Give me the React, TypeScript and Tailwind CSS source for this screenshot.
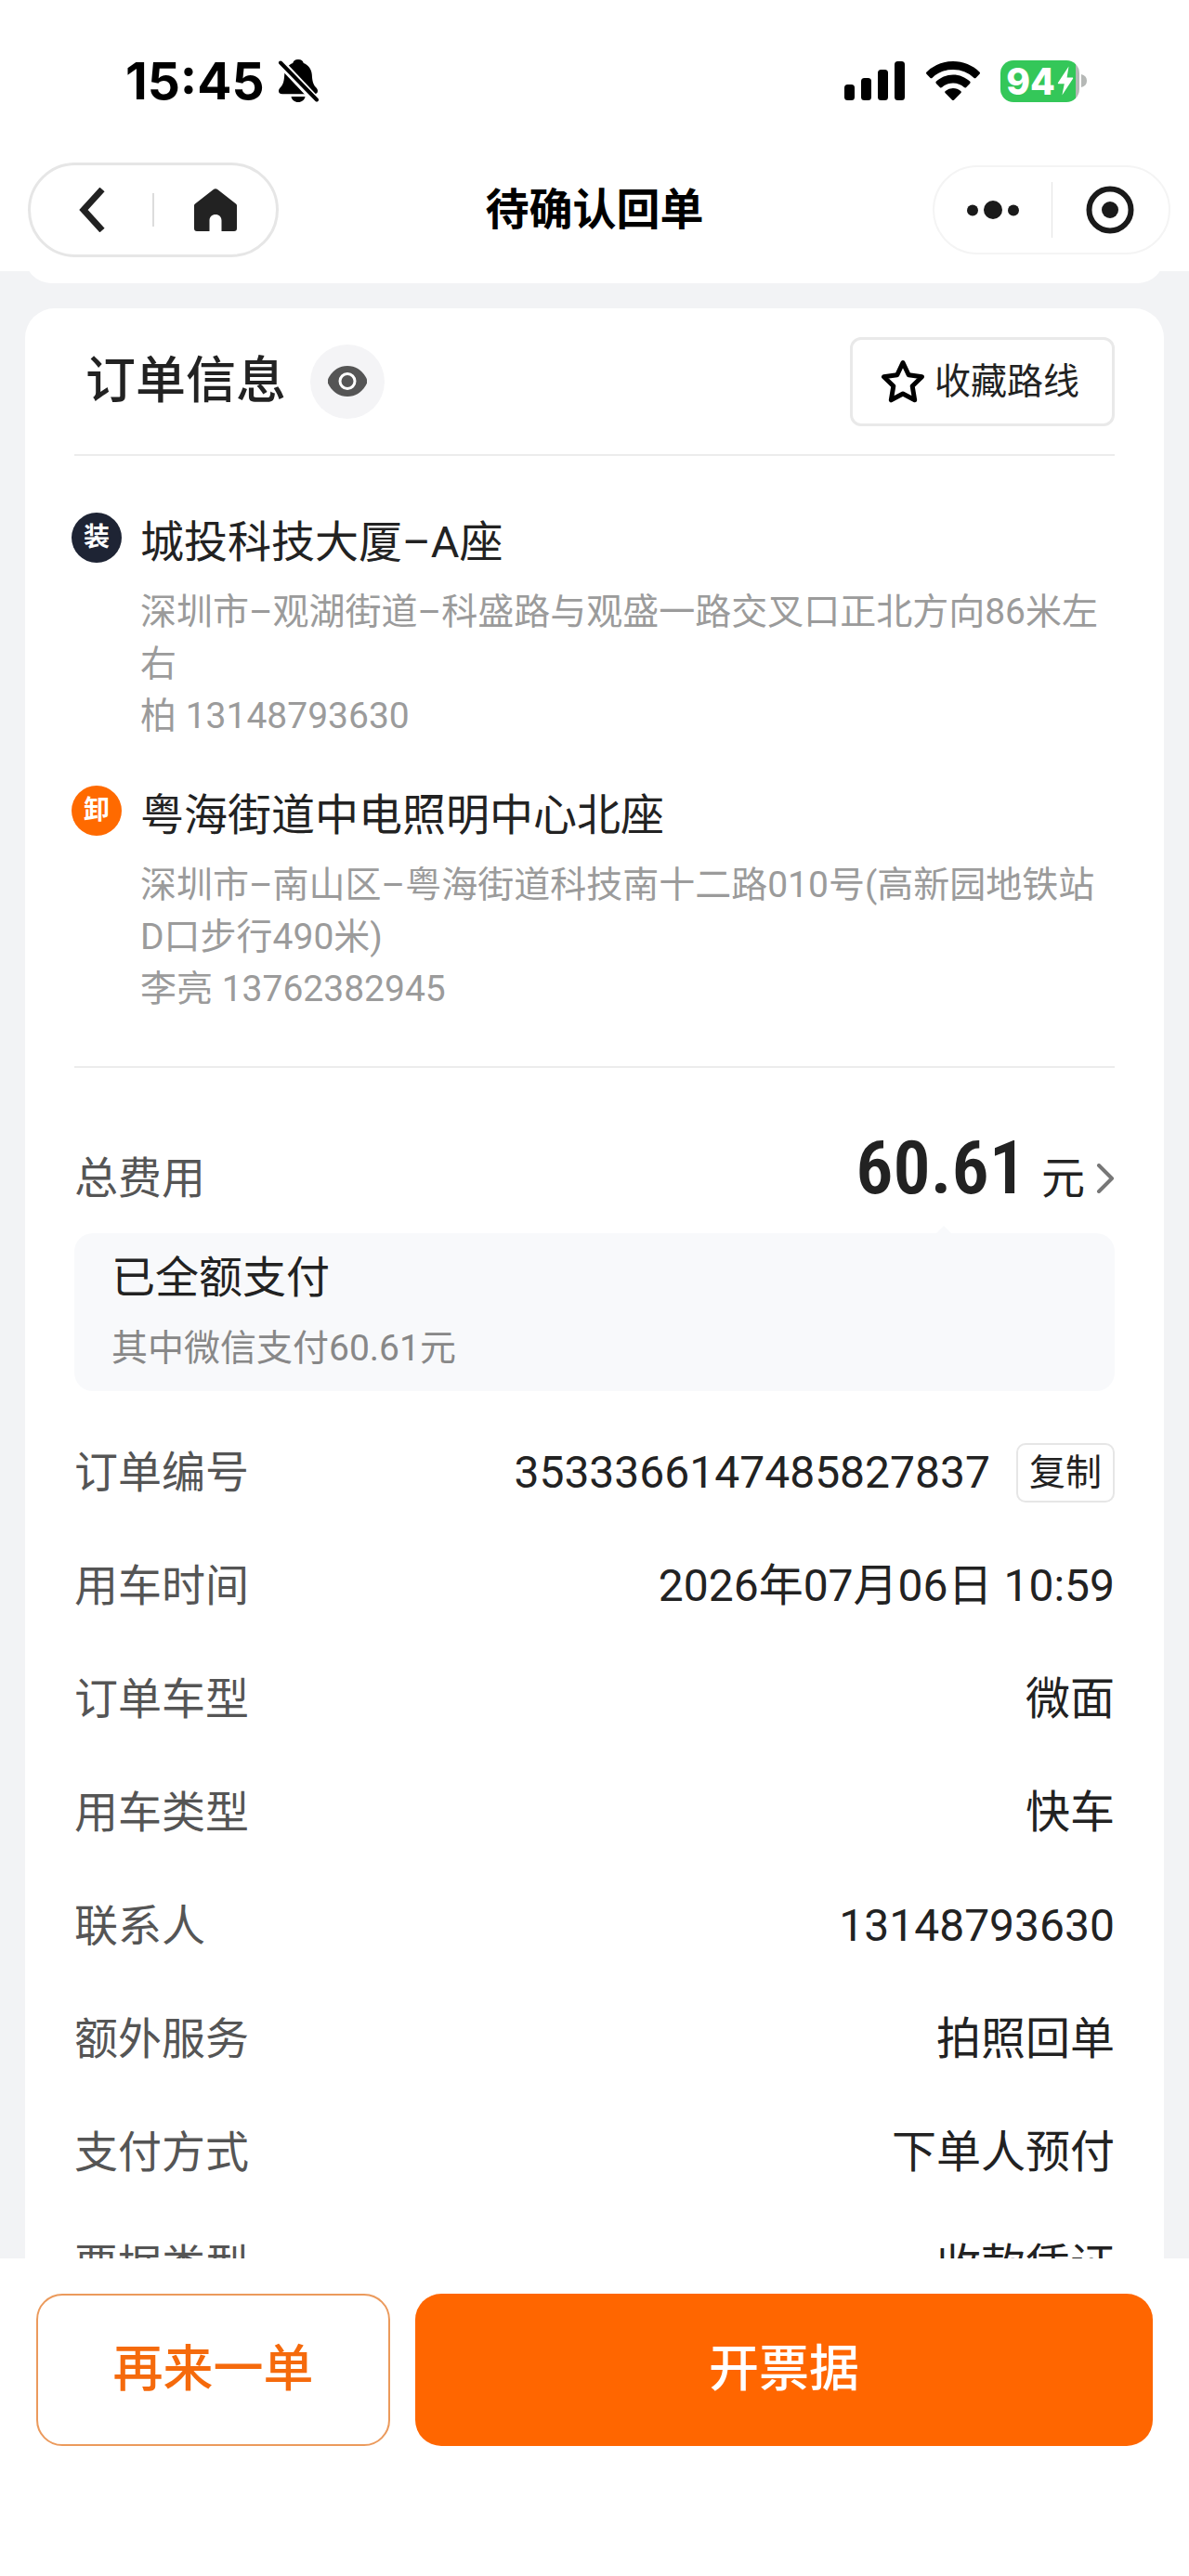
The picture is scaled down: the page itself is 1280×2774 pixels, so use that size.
import { useState } from 'react';

const stops = [
  {
    tag: '装',
    tagColor: 'bg-[#1e2434]',
    name: '城投科技大厦–A座',
    address: '深圳市–观湖街道–科盛路与观盛一路交叉口正北方向86米左右',
    contact: '柏 13148793630',
  },
  {
    tag: '卸',
    tagColor: 'bg-[#ff6a00]',
    name: '粤海街道中电照明中心北座',
    address: '深圳市–南山区–粤海街道科技南十二路010号(高新园地铁站D口步行490米)',
    contact: '李亮 13762382945',
  },
];

const details = [
  { label: '订单编号', value: '3533366147485827837', copy: true },
  { label: '用车时间', value: '2026年07月06日 10:59' },
  { label: '订单车型', value: '微面' },
  { label: '用车类型', value: '快车' },
  { label: '联系人', value: '13148793630' },
  { label: '额外服务', value: '拍照回单' },
  { label: '支付方式', value: '下单人预付' },
  { label: '票据类型', value: '收款凭证' },
];

const BellOffIcon = () => (
  <svg width="44" height="48" viewBox="0 0 44 48" fill="none">
    <path
      d="M22 1c3.400 0 5 1.600 5.800 4 5.200 2 8.600 6.600 9 12.400.4 6 1 10 4.200 13.600 1.400 1.600 2 2.600 2 4 0 2.300-1.600 3.300-4 3.300H5C2.600 38.300 1 37.300 1 35c0-1.400.7-2.400 2-4 3.300-3.600 3.800-7.600 4.200-13.600C7.600 11.600 11 7 16.200 5 17 2.600 18.600 1 22 1Z"
      fill="#000"
    />
    <path d="M14.500 41h15c-.6 3.600-3.600 6-7.500 6s-6.900-2.400-7.500-6Z" fill="#000" />
    <path d="M0 1.500l44 46.500" stroke="#fff" strokeWidth="9" />
    <path d="M3 4.500l39 40" stroke="#000" strokeWidth="4" strokeLinecap="round" />
  </svg>
);

const SignalIcon = () => (
  <svg width="66" height="42" viewBox="0 0 66 42" fill="#000">
    <rect x="0" y="25" width="11" height="17" rx="3.500" />
    <rect x="18" y="18" width="11" height="24" rx="3.500" />
    <rect x="36" y="9" width="11" height="33" rx="3.500" />
    <rect x="54" y="0" width="11" height="42" rx="3.500" />
  </svg>
);

const WifiIcon = () => (
  <svg width="58" height="42" viewBox="0 0 58 42" fill="#000">
    <path d="M29 0c11 0 21 4.300 28.400 11.400.8.700.8 1.700.1 2.400l-3.800 3.900c-.7.700-1.700.7-2.400 0A32 32 0 0 0 29 9 32 32 0 0 0 6.700 17.700c-.7.700-1.700.7-2.400 0L.5 13.800c-.7-.7-.7-1.700.1-2.400A41 41 0 0 1 29 0Z" />
    <path d="M29 14.500c7 0 13.200 2.700 18 7.100.8.700.8 1.700.1 2.400l-3.900 3.900c-.7.700-1.600.7-2.300.1A17.400 17.400 0 0 0 29 23.400c-4.600 0-8.700 1.700-11.900 4.600-.7.600-1.600.6-2.300-.1L10.900 24c-.7-.7-.7-1.700.1-2.400 4.800-4.400 11-7.100 18-7.100Z" />
    <path d="M29 29c3.200 0 6 1.100 8.200 3 .8.700.8 1.600.1 2.300l-7.100 7.100c-.7.700-1.700.7-2.400 0l-7.100-7.100c-.7-.7-.7-1.600.1-2.300A12.500 12.500 0 0 1 29 29Z" />
  </svg>
);

const Battery = () => (
  <div className="flex items-center gap-0.5">
    <div className="flex h-[45px] w-[85px] items-center justify-center gap-0.5 rounded-[14px] bg-linear-to-r from-[#34c759] from-95% to-[#b5b8b6] to-95%">
      <span className="text-[39px] leading-none font-extrabold text-white">94</span>
      <svg width="18" height="34" viewBox="0 0 18 31" fill="#fff">
        <path d="M12.500 0 1 17.500c-.4.700 0 1.300.8 1.300h6L5.400 31 17 13.300c.5-.7.1-1.300-.7-1.300h-5.700L12.500 0Z" />
      </svg>
    </div>
    <svg width="6" height="14" viewBox="0 0 6 14" fill="#b5b8b6">
      <path d="M0 0c4 1 6 3.500 6 7s-2 6-6 7V0Z" />
    </svg>
  </div>
);

const App = () => {
  const [showInfo, setShowInfo] = useState(true);
  const [favorite, setFavorite] = useState(false);

  return (
    <div className="flex h-screen flex-col bg-white font-[Roboto,'Noto_Sans_CJK_SC',sans-serif] text-[#222]">
      {/* Status bar */}
      <div className="flex h-[174px] shrink-0 items-center justify-between pr-[110px] pl-[135px] font-[Inter,sans-serif]">
        <div className="flex items-center gap-3.5 text-black">
          <span className="text-[55px] leading-none font-bold">15:45</span>
          <BellOffIcon />
        </div>
        <div className="flex items-center gap-[22px]">
          <SignalIcon />
          <WifiIcon />
          <Battery />
        </div>
      </div>

      {/* Navigation */}
      <header className="grid h-[118px] shrink-0 grid-cols-[1fr_auto_1fr] items-center px-5 pb-3.5">
        <div className="ml-2.5 flex h-[102px] w-[270px] items-center rounded-full border-3 border-[#e6e6e6]">
          <button type="button" aria-label="返回" className="flex flex-1 justify-center">
            <svg width="30" height="48" viewBox="0 0 30 48" fill="none" stroke="#222" strokeWidth="7">
              <path d="M26 2 6 24l20 22" />
            </svg>
          </button>
          <span className="h-9 w-0.5 bg-[#dcdcdc]" />
          <button type="button" aria-label="首页" className="flex flex-1 justify-center">
            <svg width="48" height="46" viewBox="0 0 48 46" fill="#222">
              <path d="M21.500 1.200a4 4 0 0 1 5 0L46 16.500c.8.700 1 1.300 1 2.300V43c0 2-1 3-3 3H30.500V34.500c0-4-2.700-6.500-6.500-6.500s-6.500 2.500-6.500 6.500V46H4c-2 0-3-1-3-3V18.800c0-1 .2-1.600 1-2.300L21.500 1.200Z" />
            </svg>
          </button>
        </div>
        <h1 className="text-[47px] leading-[60px] font-bold text-black">待确认回单</h1>
        <div className="flex h-24 w-[256px] items-center justify-self-end rounded-full border-2 border-[#f4f4f4]">
          <button type="button" aria-label="更多" className="flex flex-1 justify-center">
            <svg width="56" height="20" viewBox="0 0 56 20" fill="#1a1a1a">
              <circle cx="6" cy="10.500" r="6" />
              <circle cx="28" cy="10" r="10" />
              <circle cx="50" cy="10.500" r="6" />
            </svg>
          </button>
          <span className="h-[60px] w-px bg-[#e4e4e4]" />
          <button type="button" aria-label="关闭" className="flex flex-1 justify-center">
            <svg width="52" height="52" viewBox="0 0 52 52" fill="none">
              <circle cx="26" cy="26" r="22.500" stroke="#1a1a1a" strokeWidth="6" />
              <circle cx="26" cy="26" r="9" fill="#1a1a1a" />
            </svg>
          </button>
        </div>
      </header>

      <main className="min-h-0 flex-1 overflow-hidden bg-[#f2f3f5] px-[27px]">
        {/* End of the card above */}
        <div className="-mt-[27px] h-10 rounded-b-[28px] bg-white" />

        <section className="mt-[27px] rounded-[32px] bg-white px-[53px]">
          <div className="flex h-[159px] items-center border-b-2 border-[#ececec] pl-3">
            <h2 className="text-[54px] leading-[64px] font-medium">订单信息</h2>
            <button
              type="button"
              aria-label="显示或隐藏"
              onClick={() => setShowInfo(!showInfo)}
              className="ml-[26px] flex size-20 items-center justify-center rounded-full bg-[#f4f4f6]"
            >
              <svg width="42" height="33" viewBox="0 0 42 33" fill="none">
                <path
                  d="M21 0c8.500 0 15 4.300 19.600 11.700 2.200 3.600 2.200 6 0 9.600C36 28.700 29.500 33 21 33S6 28.700 1.400 21.300c-2.200-3.600-2.200-6 0-9.600C6 4.300 12.500 0 21 0Z"
                  fill="#555"
                />
                <circle cx="21" cy="16.500" r="8" stroke="#fff" strokeWidth="3" />
              </svg>
            </button>
            <button
              type="button"
              onClick={() => setFavorite(!favorite)}
              className="ml-auto flex h-24 items-center gap-2.5 rounded-xl border-3 border-[#e9e9e9] pr-[35px] pl-[30px] text-[39px] leading-[52px]"
            >
              <svg
                width="48"
                height="48"
                viewBox="0 0 48 48"
                fill={favorite ? '#000' : 'none'}
                stroke="#000"
                strokeWidth="5"
                strokeLinejoin="round"
              >
                <path d="M24 3.500l6.200 13.200 14.300 2-10.300 10.100 2.500 15L24 37l-12.700 6.800 2.500-15L3.500 18.700l14.300-2L24 3.500Z" />
              </svg>
              收藏路线
            </button>
          </div>

          {/* Route */}
          <div className="flex flex-col gap-[47px] border-b-2 border-[#ececec] pt-[61px] pb-[55px]">
            {stops.map((stop) => (
              <div key={stop.tag} className="-ml-[3px] flex items-start gap-5">
                <span
                  className={`flex size-[54px] shrink-0 items-center justify-center rounded-full text-[28px] leading-none font-bold text-white ${stop.tagColor}`}
                >
                  {stop.tag}
                </span>
                <div className="pr-3">
                  <h3 className="text-[47px] leading-[64px]">{stop.name}</h3>
                  <div className="mt-[15px] text-[39px] leading-[56px] text-[#9b9b9b]">
                    <p>{stop.address}</p>
                    <p>{stop.contact}</p>
                  </div>
                </div>
              </div>
            ))}
          </div>

          {/* Cost */}
          <div className="flex items-baseline justify-between pt-[60px] pb-[22px]">
            <span className="text-[47px] leading-[60px] text-[#555]">总费用</span>
            <a href="#cost" className="flex items-baseline text-[47px] leading-[60px]">
              <strong className="mr-4 font-['Roboto_Condensed',Roboto,sans-serif] text-[80px] leading-[96px] font-semibold">
                60.61
              </strong>
              元
              <svg
                className="ml-3"
                width="20"
                height="32"
                viewBox="0 0 20 32"
                fill="none"
                stroke="#777"
                strokeWidth="4"
                strokeLinecap="round"
                strokeLinejoin="round"
              >
                <path d="M3 2l14 14L3 30" />
              </svg>
            </a>
          </div>

          <div className="relative rounded-[20px] bg-[#f8f9fb] px-10 pt-[18px] pb-5">
            <svg className="absolute -top-2 right-44" width="16" height="8" viewBox="0 0 16 8" fill="#f8f9fb">
              <path d="M0 8 8 0l8 8H0Z" />
            </svg>
            <p className="text-[47px] leading-[60px]">已全额支付</p>
            <p className="mt-5 text-[39px] leading-[52px] text-[#888]">其中微信支付60.61元</p>
          </div>

          <dl className="mt-[27px]">
            {details.map((item) => (
              <div key={item.label} className="flex h-[122px] items-center justify-between text-[48px] leading-[60px]">
                <dt className="text-[47px] text-[#555]">{item.label}</dt>
                <dd className="flex items-center gap-7">
                  {item.value}
                  {item.copy && (
                    <button
                      type="button"
                      onClick={() => navigator.clipboard?.writeText(item.value)}
                      className="flex h-16 items-center rounded-[10px] border-2 border-[#e6e6e6] px-3 text-[39px] leading-[52px]"
                    >
                      复制
                    </button>
                  )}
                </dd>
              </div>
            ))}
          </dl>
        </section>
      </main>

      {/* Actions */}
      <footer className="flex shrink-0 gap-[27px] bg-white px-[39px] pt-[38px] pb-[140px] text-[54px] leading-[64px] font-medium">
        <button type="button" className="h-[164px] w-[381px] rounded-[28px] border-2 border-[#eb9a5c] text-[#f56a0c]">
          再来一单
        </button>
        <button type="button" className="h-[164px] flex-1 rounded-[28px] bg-[#ff6600] text-white">
          开票据
        </button>
      </footer>
    </div>
  );
};

export default App;
